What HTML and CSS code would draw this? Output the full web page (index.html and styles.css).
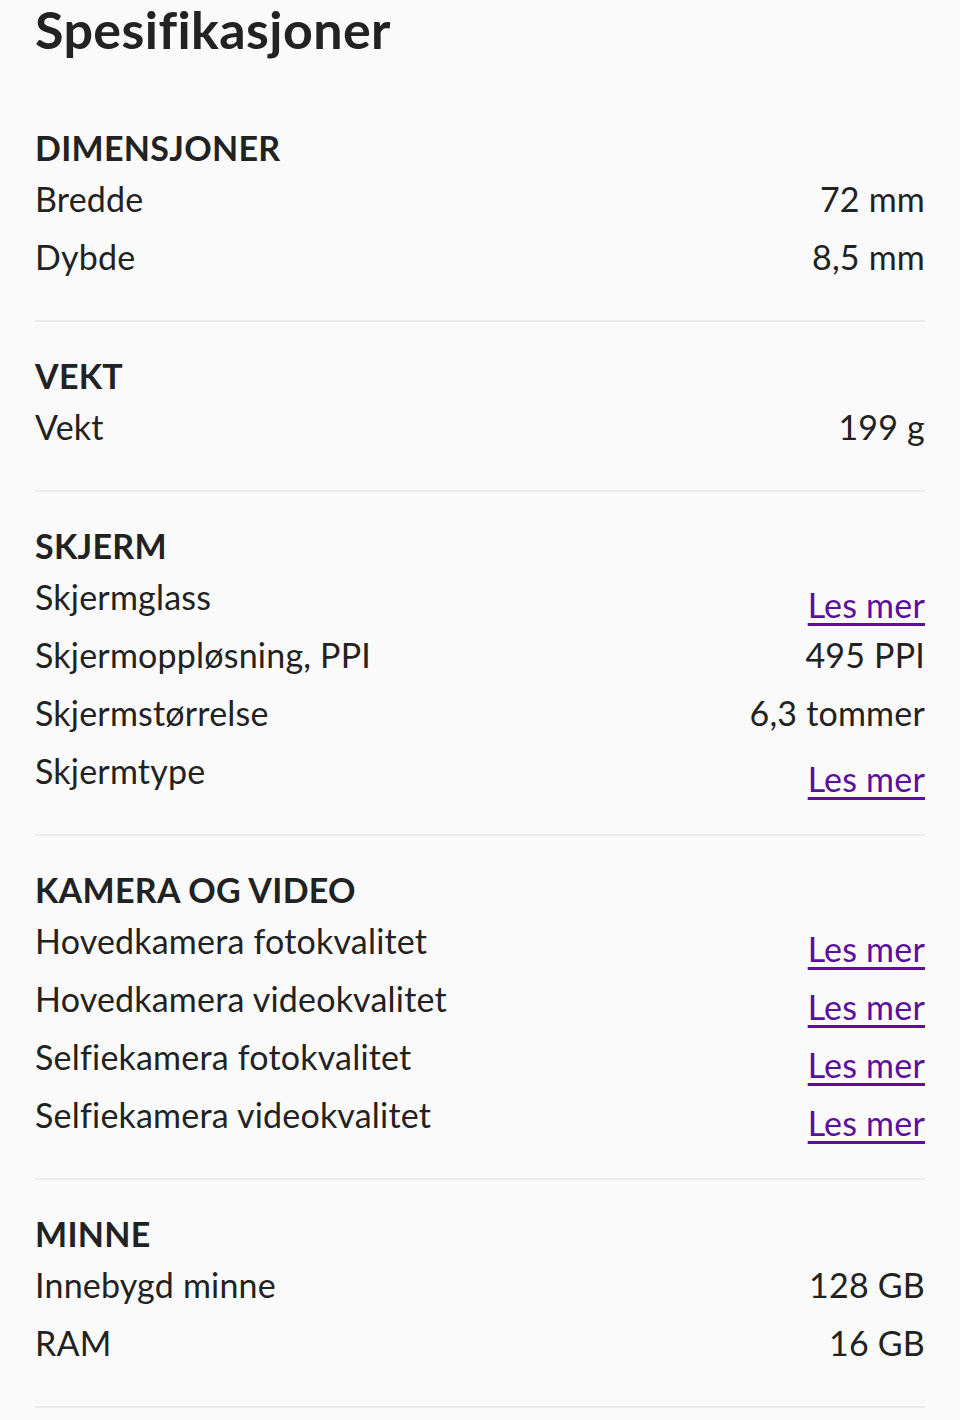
FILE: index.html
```html
<!DOCTYPE html>
<html lang="no">
<head>
    <meta charset="UTF-8">
    <meta name="viewport" content="width=device-width, initial-scale=1.0">
    <title>Spesifikasjoner</title>
    <link rel="stylesheet" href="styles.css">
</head>
<body>
    <div class="specs">
        <h1>Spesifikasjoner</h1>

        <section class="group">
            <h2>DIMENSJONER</h2>
            <div class="row"><span class="label">Bredde</span><span class="value">72 mm</span></div>
            <div class="row"><span class="label">Dybde</span><span class="value">8,5 mm</span></div>
        </section>

        <section class="group">
            <h2>VEKT</h2>
            <div class="row"><span class="label">Vekt</span><span class="value">199 g</span></div>
        </section>

        <section class="group">
            <h2>SKJERM</h2>
            <div class="row"><span class="label">Skjermglass</span><a class="more" href="#">Les mer</a></div>
            <div class="row"><span class="label">Skjermoppløsning, PPI</span><span class="value">495 PPI</span></div>
            <div class="row"><span class="label">Skjermstørrelse</span><span class="value">6,3 tommer</span></div>
            <div class="row"><span class="label">Skjermtype</span><a class="more" href="#">Les mer</a></div>
        </section>

        <section class="group">
            <h2>KAMERA OG VIDEO</h2>
            <div class="row"><span class="label">Hovedkamera fotokvalitet</span><a class="more" href="#">Les mer</a></div>
            <div class="row"><span class="label">Hovedkamera videokvalitet</span><a class="more" href="#">Les mer</a></div>
            <div class="row"><span class="label">Selfiekamera fotokvalitet</span><a class="more" href="#">Les mer</a></div>
            <div class="row"><span class="label">Selfiekamera videokvalitet</span><a class="more" href="#">Les mer</a></div>
        </section>

        <section class="group">
            <h2>MINNE</h2>
            <div class="row"><span class="label">Innebygd minne</span><span class="value">128 GB</span></div>
            <div class="row"><span class="label">RAM</span><span class="value">16 GB</span></div>
        </section>
    </div>
</body>
</html>
```

FILE: styles.css
```css
body {
    margin: 0;
    background-color: #fafafa;
    font-family: Lato, 'Open Sans', sans-serif;
    font-variant-ligatures: none;
    color: #222;
}
.specs {
    padding: 0 35px;
}
h1 {
    margin: 0;
    padding-top: 1px;
    font-size: 52px;
    line-height: 56px;
    letter-spacing: 0.4px;
    font-weight: 700;
    color: #222;
}
.group {
    padding: 30px 0 32px;
    border-bottom: 2px solid #ebebeb;
}
.group:first-of-type {
    padding-top: 67px;
}
h2 {
    margin: 0;
    font-size: 34px;
    line-height: 48px;
    letter-spacing: 0.3px;
    font-weight: 700;
    color: #222;
}
.row {
    display: flex;
    justify-content: space-between;
    align-items: flex-start;
    height: 58px;
    font-size: 34px;
    letter-spacing: 0.2px;
}
.label,
.value {
    line-height: 54px;
}
.more {
    display: inline-block;
    padding-top: 16px;
    line-height: 38px;
    color: #5c0f9c;
    text-decoration: underline;
    text-decoration-thickness: 3px;
    text-underline-offset: 5px;
}
```
